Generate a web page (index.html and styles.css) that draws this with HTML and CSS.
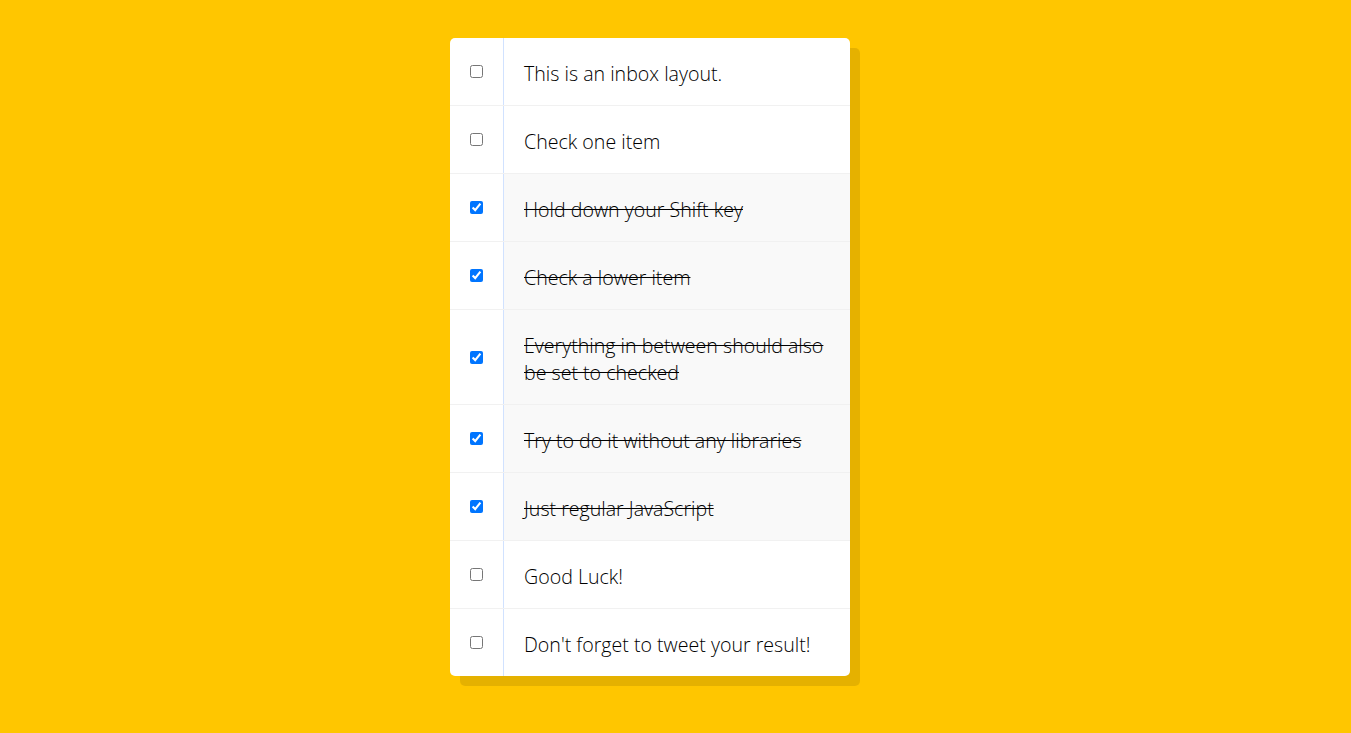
FILE: index.html
```html
<!DOCTYPE html>
<html>
  <head>
    <title>Hold Shift to Check Multiple Checkboxes</title>
    <link rel="stylesheet" href="styles.css">
  </head>
  <body>
    <div class="inbox">
      <div class="item">
        <input type="checkbox">
        <p>This is an inbox layout.</p>
      </div>
      <div class="item">
        <input type="checkbox">
        <p>Check one item</p>
      </div>
      <div class="item">
        <input type="checkbox" checked>
        <p>Hold down your Shift key</p>
      </div>
      <div class="item">
        <input type="checkbox" checked>
        <p>Check a lower item</p>
      </div>
      <div class="item">
        <input type="checkbox" checked>
        <p>Everything in between should also be set to checked</p>
      </div>
      <div class="item">
        <input type="checkbox" checked>
        <p>Try to do it without any libraries</p>
      </div>
      <div class="item">
        <input type="checkbox" checked>
        <p>Just regular JavaScript</p>
      </div>
      <div class="item">
        <input type="checkbox">
        <p>Good Luck!</p>
      </div>
      <div class="item">
        <input type="checkbox">
        <p>Don't forget to tweet your result!</p>
      </div>
    </div>
  </body>
</html>
```

FILE: styles.css
```css
html {
  font-family: "Open Sans", sans-serif;
  background: #ffc600;
}

body {
  margin: 0;
  padding: 38px 51px 38px 0;
}

.inbox {
  max-width: 400px;
  margin: 0 auto;
  background: white;
  border-radius: 5px;
  box-shadow: 10px 10px 0 rgba(0,0,0,0.1);
}

.item {
  display: flex;
  align-items: center;
  border-bottom: 1px solid #f1f1f1;
}

.item:last-child {
  border-bottom: 0;
}

input:checked + p {
  background: #f9f9f9;
  text-decoration: line-through;
}

input[type="checkbox"] {
  margin: 20px;
  width: 13px;
  height: 13px;
}

p {
  margin: 0;
  padding: 22px 20px 18px;
  flex: 1;
  align-self: stretch;
  font-size: 19.6px;
  font-weight: 300;
  line-height: 27px;
  color: #000;
  border-left: 1px solid #d1e2ff;
}
```
